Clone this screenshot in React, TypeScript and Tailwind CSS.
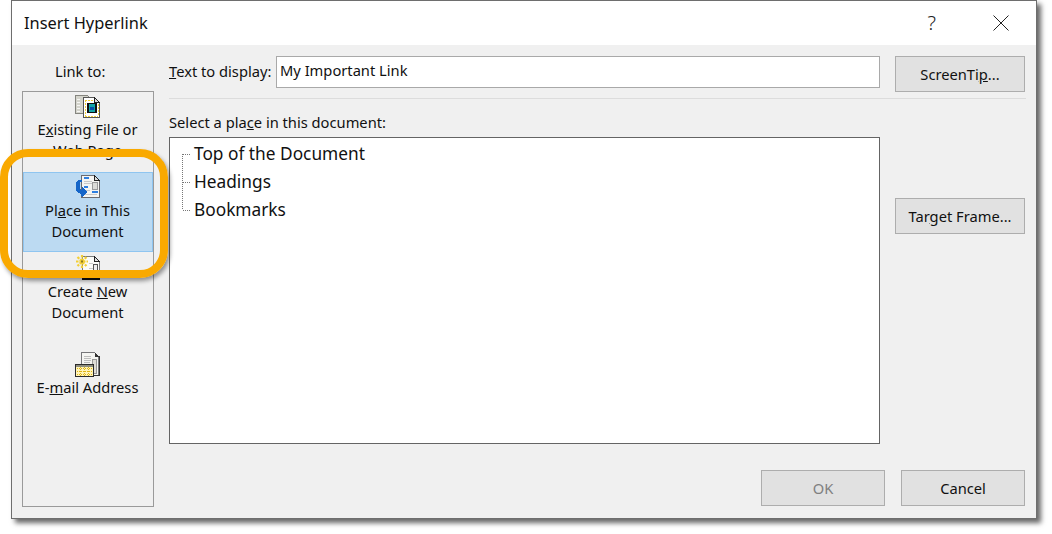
import type { ReactNode } from "react"

function FileIcon() {
  return (
    <svg width="26" height="25" viewBox="0 0 26 25" shapeRendering="crispEdges">
      <path d="M0.500 1.500h12l3 3v15h-15z" fill="#d4d4cc" stroke="#85857f" />
      <path d="M2 5h3M2 8h3M2 11h3M2 14h3M2 17h3" stroke="#f6f6f4" />
      <path d="M8.500 3.500h11l5 5v15h-16z" fill="#fff" stroke="#555" />
      <path d="M19.500 3.500l5 5h-5z" fill="#ddd" stroke="#222" />
      <path d="M10 6h9M10 22h13M10 6v16M23 10v12" stroke="#f2cf3a" strokeDasharray="2 1" />
      <rect x="12" y="9" width="10" height="10" fill="#101010" />
      <rect x="14" y="10" width="6" height="8" fill="#12a5a8" />
      <rect x="15" y="13" width="4" height="3" fill="#0a4fa8" />
    </svg>
  )
}

function PlaceIcon() {
  return (
    <svg width="26" height="25" viewBox="0 0 26 25" shapeRendering="crispEdges">
      <path d="M6.500 1.500h13l5 5v17h-18z" fill="#f5f5f2" stroke="#6a6a6e" />
      <path d="M19.500 1.500l5 5h-5z" fill="#ddd" stroke="#222" />
      <path d="M9 4h5M9 13h4M17 18h6" stroke="#2f7fe0" strokeWidth="2" />
      <path d="M9 7h8M9 9h8M9 16h6M9 20h13" stroke="#c9c9c9" />
      <rect x="17.500" y="8.500" width="5" height="7" fill="#dcdcd8" stroke="#999" />
      <path d="M4 6h3v2H5v7l2 1v-3l5 5-5 6-1-4-3-1-2-3V8z" fill="#1565c8" />
    </svg>
  )
}

function NewIcon() {
  return (
    <svg width="26" height="26" viewBox="0 0 26 26">
      <g shapeRendering="crispEdges">
        <path d="M7.500 2.500h12l5 5v18h-17z" fill="#fbfbf8" stroke="#7a7a7a" />
        <path d="M19.500 2.500l5 5h-5z" fill="#ddd" stroke="#222" />
        <rect x="18.500" y="10.500" width="4" height="9" fill="#eee" stroke="#555" />
        <path d="M14 9h4M14 14h4M14 17h4" stroke="#c8c8c8" />
        <rect x="7" y="24" width="18" height="2" fill="#111" />
      </g>
      <path d="M1 7.500h12M7 1v13M2.500 3l9 9M11.500 3l-9 9" stroke="#f3cf35" strokeWidth="2.200" strokeDasharray="2.500 1" fill="none" />
      <rect x="6" y="6.500" width="2" height="2" fill="#8b7a20" />
    </svg>
  )
}

function MailIcon() {
  return (
    <svg width="26" height="26" viewBox="0 0 26 26" shapeRendering="crispEdges">
      <path d="M6.500 0.500h13l4 4v19h-17z" fill="#f5f5f2" stroke="#77777a" />
      <path d="M19.500 0.500l4 4h-4zM24 4h1v20H10v-1h14z" fill="#333" />
      <rect x="17.500" y="7.500" width="4" height="14" fill="#dedcd6" stroke="#999" />
      <path d="M9 4h7M9 6h7M9 8h7M9 10h6" stroke="#bdbdbd" />
      <rect x="0.500" y="12.500" width="18" height="12" fill="#fff3b8" stroke="#2b2b2b" />
      <rect x="1" y="13" width="17" height="2" fill="#8d8d7d" />
      <path d="M2 16h15M2 19h15M2 22h15M5 15v9M9 15v9M13 15v9" stroke="#e0b512" strokeDasharray="1 1" />
    </svg>
  )
}

function LinkItem({ icon, children, selected, className }: { icon: ReactNode; children: ReactNode; selected?: boolean; className?: string }) {
  return (
    <div
      className={
        "flex flex-col items-center text-center leading-[21px] " +
        (selected ? "bg-[#bcdaf2] border border-[#8fc5f0] " : "") +
        (className ?? "")
      }
    >
      {icon}
      {children}
    </div>
  )
}

function TreeLine({ first, last }: { first?: boolean; last?: boolean }) {
  return (
    <svg width="12" height="28" className="shrink-0 text-[#777]" shapeRendering="crispEdges">
      <line x1="0.500" x2="0.500" y1={first ? 14 : 0} y2={last ? 14 : 28} stroke="currentColor" strokeDasharray="1 1" />
      <line x1="1" x2="9" y1="14.500" y2="14.500" stroke="currentColor" strokeDasharray="1 1" />
    </svg>
  )
}

function Btn({ children, className }: { children: ReactNode; className?: string }) {
  return (
    <button className={"h-9 bg-[#e1e1e1] border border-[#adadad] text-[14.7px] " + (className ?? "")}>
      {children}
    </button>
  )
}

export default function App() {
  return (
    <div className="relative w-[1052px] h-[534px] bg-white overflow-hidden font-['Noto_Sans','Open_Sans',sans-serif] text-[14.7px] text-[#111]">
      <div className="ml-[11px] w-[1026px] h-[519px] flex flex-col border border-[#6e6e6e] bg-[#f0f0f0] shadow-[4px_4px_5px_rgba(0,0,0,0.6)]">
        {/* title bar */}
        <div className="h-[44px] shrink-0 bg-white flex items-center pl-3 pr-[27px]">
          <span className="text-[16.4px]">Insert Hyperlink</span>
          <span className="ml-auto text-[20px] font-light text-[#222]">?</span>
          <svg width="16" height="16" viewBox="0 0 16 16" className="ml-[57px]">
            <path d="M0.500 0.500l15 15M15.500 0.500l-15 15" stroke="#222" fill="none" />
          </svg>
        </div>

        <div className="flex-1 flex pl-[10px] pr-[10px]">
          {/* link to */}
          <div className="w-[132px] shrink-0 flex flex-col">
            <div className="h-[46px] flex items-end pb-[10px] pl-[33px] leading-5">Link to:</div>
            <div className="h-[416px] border border-[#9a9a9a] flex flex-col">
              <LinkItem icon={<FileIcon />} className="h-[80px] pt-[2px]">
                <span className="mr-px">E<u>x</u>isting File or<br />Web Page</span>
              </LinkItem>
              <LinkItem selected icon={<PlaceIcon />} className="h-[80px] pt-[1px]">
                <span className="mt-[1px] mr-px">Pl<u>a</u>ce in This<br />Document</span>
              </LinkItem>
              <LinkItem icon={<NewIcon />} className="h-[80px] pt-[2px]">
                <span className="mt-[1px] mr-px">Create <u>N</u>ew<br />Document</span>
              </LinkItem>
              <LinkItem icon={<MailIcon />} className="pt-[20px]">
                <span className="mt-[-1px] mr-px">E-<u>m</u>ail Address</span>
              </LinkItem>
            </div>
          </div>

          {/* main */}
          <div className="ml-[15px] flex-1 flex flex-col pt-[11px]">
            <div className="flex">
              <div className="w-[711px] flex h-9">
                <span className="w-[107px] pt-[5px] leading-5"><u>T</u>ext to display:</span>
                <div className="flex-1 h-8 bg-white border border-[#a9a9a9] pl-[3px] leading-[26px]">My Important Link</div>
              </div>
              <Btn className="ml-[15px] w-[130px]">ScreenTi<u>p</u>...</Btn>
            </div>
            <div className="h-px mt-[6px] bg-[#dcdcdc] w-[857px]" />
            <div className="flex">
              <div className="w-[711px]">
                <div className="h-[38px] pt-[13px] leading-5">Select a pla<u>c</u>e in this document:</div>
                <div className="h-[307px] bg-white border border-[#646464] pl-3 pt-[2px] text-[17.3px]">
                  {["Top of the Document", "Headings", "Bookmarks"].map((t, i) => (
                    <div key={t} className="flex items-center h-[28px]">
                      <TreeLine first={i === 0} last={i === 2} />
                      <span>{t}</span>
                    </div>
                  ))}
                </div>
              </div>
              <div className="ml-[15px] pt-[99px]">
                <Btn className="w-[130px]">Tar<u>g</u>et Frame...</Btn>
              </div>
            </div>
            <div className="flex justify-end gap-4 mt-[26px] mr-px">
              <Btn className="w-[124px] text-[#808080]">OK</Btn>
              <Btn className="w-[124px]">Cancel</Btn>
            </div>
          </div>
        </div>
      </div>

      {/* callout ring */}
      <div className="absolute left-0 top-[149px] w-[168px] h-[129px] rounded-[28px] border-[8px] border-[#f9a900] shadow-[2px_3px_4px_rgba(0,0,0,0.4)]" />
    </div>
  )
}
